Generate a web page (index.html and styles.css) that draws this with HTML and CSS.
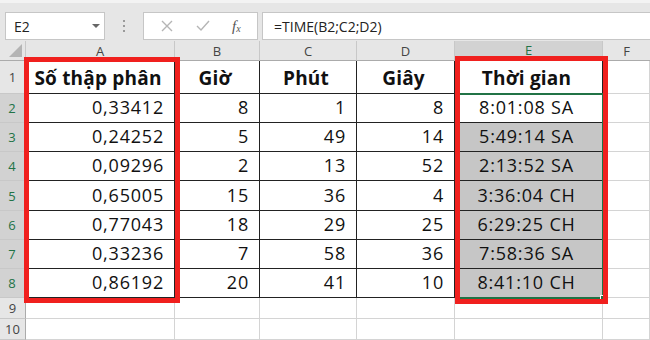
FILE: index.html
```html
<!DOCTYPE html>
<html lang="vi">
<head>
<meta charset="utf-8">
<link rel="stylesheet" href="styles.css">
</head>
<body>
<div class="app">
  <div class="toolbar">
    <div class="namebox"><span>E2</span><span class="caret"></span></div>
    <div class="dots"><i></i><i></i><i></i></div>
    <div class="fnbox">
      <svg class="ico" width="14" height="14" viewBox="0 0 14 14"><path d="M2 2 L12 12 M12 2 L2 12" stroke="#b5b5b5" stroke-width="1.4" fill="none"/></svg>
      <svg class="ico" width="16" height="14" viewBox="0 0 16 14"><path d="M2 7 L6 11 L14 2" stroke="#b5b5b5" stroke-width="1.4" fill="none"/></svg>
      <span class="fx">f<sub>x</sub></span>
    </div>
    <div class="formula">=TIME(B2;C2;D2)</div>
  </div>
  <div class="sheet">
    <div class="corner"><span class="tri"></span></div>
    <div class="ch">A</div><div class="ch">B</div><div class="ch">C</div><div class="ch">D</div><div class="ch sel">E</div><div class="ch last">F</div>

    <div class="rh">1</div>
    <div class="c d hd">Số thập phân</div><div class="c d hd">Giờ</div><div class="c d hd">Phút</div><div class="c d hd">Giây</div><div class="c d hd e1">Thời gian</div><div class="c"></div>

    <div class="rh rs">2</div>
    <div class="c d r">0,33412</div><div class="c d r">8</div><div class="c d r">1</div><div class="c d r">8</div><div class="c d t act">8:01:08 SA</div><div class="c"></div>

    <div class="rh rs">3</div>
    <div class="c d r">0,24252</div><div class="c d r">5</div><div class="c d r">49</div><div class="c d r">14</div><div class="c d t s">5:49:14 SA</div><div class="c"></div>

    <div class="rh rs">4</div>
    <div class="c d r">0,09296</div><div class="c d r">2</div><div class="c d r">13</div><div class="c d r">52</div><div class="c d t s">2:13:52 SA</div><div class="c"></div>

    <div class="rh rs">5</div>
    <div class="c d r">0,65005</div><div class="c d r">15</div><div class="c d r">36</div><div class="c d r">4</div><div class="c d t s">3:36:04 CH</div><div class="c"></div>

    <div class="rh rs">6</div>
    <div class="c d r">0,77043</div><div class="c d r">18</div><div class="c d r">29</div><div class="c d r">25</div><div class="c d t s">6:29:25 CH</div><div class="c"></div>

    <div class="rh rs">7</div>
    <div class="c d r">0,33236</div><div class="c d r">7</div><div class="c d r">58</div><div class="c d r">36</div><div class="c d t s">7:58:36 SA</div><div class="c"></div>

    <div class="rh rs">8</div>
    <div class="c d r">0,86192</div><div class="c d r">20</div><div class="c d r">41</div><div class="c d r">10</div><div class="c d t s">8:41:10 CH</div><div class="c"></div>

    <div class="rh">9</div>
    <div class="c"></div><div class="c"></div><div class="c"></div><div class="c"></div><div class="c"></div><div class="c"></div>

    <div class="rh">10</div>
    <div class="c"></div><div class="c"></div><div class="c"></div><div class="c"></div><div class="c"></div><div class="c"></div>

    <div class="selbox"><span class="handle"></span></div>
    <div class="redbox ra"></div>
    <div class="redbox re"></div>
  </div>
</div>
</body>
</html>
```
FILE: styles.css
```css
* { box-sizing: border-box; }
html, body { margin: 0; padding: 0; }
body { width: 650px; height: 340px; overflow: hidden; background: #fff; font-family: "Open Sans", "Liberation Sans", sans-serif; }
.app { width: 650px; height: 340px; display: flex; flex-direction: column; }

.toolbar { height: 50px; background: #e6e6e6; border-top: 3px solid #f3f3f3; display: flex; align-items: flex-start; padding: 9px 0 0 5px; gap: 0; }
.namebox { width: 100px; height: 28px; background: #fff; border: 1px solid #c6c6c6; display: flex; align-items: center; justify-content: space-between; padding: 0 4px 0 8px; font-size: 14px; color: #222; }
.caret { width: 0; height: 0; border-left: 4px solid transparent; border-right: 4px solid transparent; border-top: 4px solid #666; }
.dots { width: 38px; height: 28px; display: flex; flex-direction: column; align-items: center; justify-content: center; gap: 3px; }
.dots i { width: 2px; height: 2px; background: #9a9a9a; display: block; }
.fnbox { width: 115px; height: 28px; background: #fff; border: 1px solid #c6c6c6; display: flex; align-items: center; justify-content: space-around; padding: 0 6px; }
.fx { font-family: "Liberation Serif", serif; font-style: italic; font-size: 15px; color: #555; line-height: 1; }
.fx sub { font-size: 10px; vertical-align: -1px; }
.formula { flex: 1; height: 28px; margin-left: 4px; background: #fff; border: 1px solid #c6c6c6; border-right: none; display: flex; align-items: center; padding-left: 11px; font-size: 14px; color: #222; }

.sheet { position: relative; flex: 1; display: grid; grid-template-columns: 26px 149px 85px 97px 98px 148px 1fr; grid-template-rows: 20px 33px repeat(7, 29.15px) 21px 21px; }
.corner { background: #e6e6e6; border-right: 1px solid #c8c8c8; border-bottom: 1px solid #ababab; position: relative; }
.tri { position: absolute; right: 3px; bottom: 3px; width: 0; height: 0; border-left: 13px solid transparent; border-bottom: 13px solid #b4b4b4; }
.ch { background: #e6e6e6; border-right: 1px solid #c8c8c8; border-bottom: 1px solid #ababab; display: flex; align-items: center; justify-content: center; font-size: 13px; color: #444; }
.ch.sel { background: #d2d2d2; color: #217346; border-bottom: 2px solid #217346; }
.ch.last { border-right: none; }
.rh { background: #e6e6e6; border-right: 1px solid #ababab; border-bottom: 1px solid #c8c8c8; display: flex; align-items: center; justify-content: center; font-size: 13px; color: #444; }
.rh.rs { background: #d2d2d2; color: #217346; border-right: 2px solid #217346; }

.c { border-right: 1px solid #d4d4d4; border-bottom: 1px solid #d4d4d4; display: flex; align-items: flex-end; font-size: 18px; color: #111; padding: 0 10px 3px 6px; white-space: nowrap; letter-spacing: 0.8px; }
.c.d { border-right-color: #222; border-bottom-color: #222; }
.c.r { justify-content: flex-end; }
.c.t { justify-content: center; }
.c.hd { justify-content: center; font-weight: 700; font-size: 19px; letter-spacing: 0.2px; padding-bottom: 2px; }
.c.s { background: #c6c6c6; }
.c.act { background: #fff; }

.selbox { position: absolute; left: 455px; top: 52px; width: 149px; height: 206px; border: 2px solid #217346; pointer-events: none; }
.handle { position: absolute; right: -4px; bottom: -4px; width: 6px; height: 6px; background: #217346; border: 1px solid #fff; }
.redbox { position: absolute; border: 5px solid #f0201e; pointer-events: none; }
.ra { left: 24px; top: 16px; width: 156px; height: 246px; }
.re { left: 455px; top: 15px; width: 153px; height: 248px; }
```
